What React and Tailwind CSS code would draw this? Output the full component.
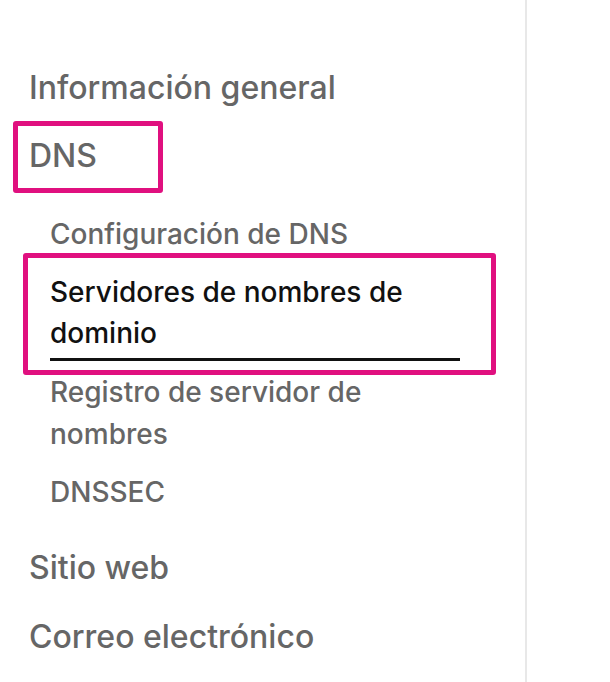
const subItems = [
  { label: 'Configuración de DNS' },
  { label: 'Servidores de nombres de dominio', active: true },
  { label: 'Registro de servidor de nombres' },
  { label: 'DNSSEC' },
];

export default function App() {
  return (
    <div
      className="flex min-h-[682px] bg-white"
      style={{ fontFamily: 'Inter, "Noto Sans", sans-serif' }}
    >
      <nav className="w-[527px] shrink-0 border-r-2 border-[#e8e8e8] pt-[54px] pl-[29px]">
        <ul>
          <li className="py-[14px] text-[32px] leading-[40px] font-medium text-[#666666]">
            Información general
          </li>
          <li className="py-[14px] text-[32px] leading-[40px] font-medium text-[#666666]">
            <span className="relative inline-block align-top">
              DNS
              {/* highlight box */}
              <span className="absolute -left-[16px] -top-[15px] h-[72px] w-[150px] rounded-[3px] border-[5px] border-[#e0107f]" />
            </span>
          </li>
          <li className="pt-[15px] pb-[13px] pl-[21px]">
            <ul className="w-[410px]">
              {subItems.map((item) =>
                item.active ? (
                  <li
                    key={item.label}
                    className="relative pt-[9px] pb-[2px] text-[28px] leading-[41px] font-medium text-[#111111]"
                  >
                    <span className="block border-b-[3px] border-[#111111] pb-[4px]">
                      {item.label}
                    </span>
                    <span className="absolute -left-[27px] -top-[10px] -right-[36px] -bottom-[12px] rounded-[3px] border-[5px] border-[#e0107f]" />
                  </li>
                ) : (
                  <li
                    key={item.label}
                    className="py-[8px] text-[28px] leading-[42px] font-medium text-[#666666]"
                  >
                    {item.label}
                  </li>
                )
              )}
            </ul>
          </li>
          <li className="pt-[14px] pb-[15px] text-[32px] leading-[40px] font-medium text-[#666666]">
            Sitio web
          </li>
          <li className="py-[14px] text-[32px] leading-[40px] font-medium text-[#666666]">
            Correo electrónico
          </li>
        </ul>
      </nav>
      <main className="flex-1" />
    </div>
  );
}
